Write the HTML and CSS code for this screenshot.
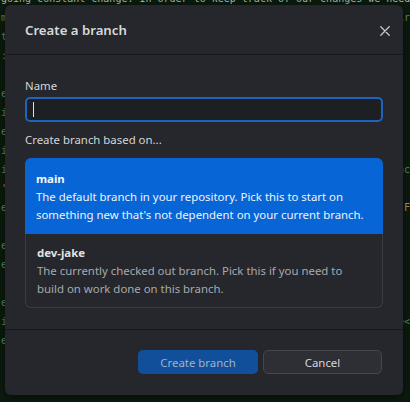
FILE: index.html
```html
<!DOCTYPE html>
<html>
<head>
<meta charset="utf-8">
<link rel="stylesheet" href="styles.css">
</head>
<body>
<div class="term">
  <div class="row"><span class="t-w">going constant change. In order to keep track of our changes we need</span></div>
  <div class="row"><span class="t-g">m</span><span class="t-g">ir</span></div>
  <div class="row"><span class="t-g">ti</span><span class="t-g"></span></div>
  <div class="row"><span class="t-g">:f</span><span class="t-g"></span></div>
  <div class="row"><span class="t-g"></span><span class="t-g"></span></div>
  <div class="row"><span class="t-g">e:</span><span class="t-g"></span></div>
  <div class="row"><span class="t-g">ie</span><span class="t-g"></span></div>
  <div class="row"><span class="t-g">e:</span><span class="t-g"></span></div>
  <div class="row"><span class="t-g">ie</span><span class="t-g"></span></div>
  <div class="row"><span class="t-g">ie</span><span class="t-g">nc</span></div>
  <div class="row"><span class="t-o">'F</span><span class="t-g"></span></div>
  <div class="row"><span class="t-g">e:</span><span class="t-o">'F</span></div>
  <div class="row"><span class="t-g"></span><span class="t-g"></span></div>
  <div class="row"><span class="t-g">e:</span><span class="t-g"></span></div>
  <div class="row"><span class="t-g">e:</span><span class="t-g"></span></div>
  <div class="row"><span class="t-g"></span><span class="t-g"></span></div>
  <div class="row"><span class="t-g">e:</span><span class="t-g"></span></div>
  <div class="row"><span class="t-g">ie</span><span class="t-g">e&lt;</span></div>
  <div class="row"><span class="t-g">ef</span><span class="t-g"></span></div>
  <div class="row"><span class="t-g"></span><span class="t-g"></span></div>
</div>
<div class="dialog">
  <div class="dialog-header">
    <h1 class="dialog-title">Create a branch</h1>
    <button class="close" aria-label="Close">
      <svg width="10" height="10" viewBox="0 0 10 10"><path d="M0.8 0.8 L9.2 9.2 M9.2 0.8 L0.8 9.2" stroke="#c4c6ca" stroke-width="1.3" fill="none" stroke-linecap="round"/></svg>
    </button>
  </div>
  <div class="dialog-body">
    <label class="field-label" for="name">Name</label>
    <div class="input"><span class="caret"></span></div>
    <div class="section-label">Create branch based on...</div>
    <div class="options">
      <div class="option selected">
        <div class="option-name">main</div>
        <div class="option-desc">The default branch in your repository. Pick this to start on something new that's not dependent on your current branch.</div>
      </div>
      <div class="option">
        <div class="option-name">dev-jake</div>
        <div class="option-desc">The currently checked out branch. Pick this if you need to build on work done on this branch.</div>
      </div>
    </div>
  </div>
  <div class="dialog-footer">
    <button class="btn btn-primary">Create branch</button>
    <button class="btn btn-secondary">Cancel</button>
  </div>
</div>
</body>
</html>
```
FILE: styles.css
```css
html, body {
  margin: 0;
  padding: 0;
  background: #0b1a0e;
  width: 410px;
  height: 402px;
  overflow: hidden;
}
.term {
  position: relative;
  top: -11px;
  width: 410px;
  height: 413px;
  overflow: hidden;
  font-family: "DejaVu Sans Mono", monospace;
  font-size: 10px;
  line-height: 19px;
  padding: 0 0 0 1px;
  box-sizing: border-box;
}
.row {
  display: flex;
  justify-content: space-between;
  height: 19px;
  overflow: hidden;
  white-space: pre;
}
.t-w { color: #a9b4a8; }
.t-g { color: #5a8a60; }
.t-o { color: #b39055; }

.dialog {
  position: absolute;
  left: 5px;
  top: 5px;
  width: 398px;
  height: 390px;
  background: #25272c;
  border-radius: 6px;
  box-sizing: border-box;
  display: flex;
  flex-direction: column;
  font-family: "Noto Sans", "Open Sans", sans-serif;
  color: #dcdde0;
  box-shadow: 0 2px 8px rgba(0,0,0,0.5);
}
.dialog-header {
  height: 49px;
  display: flex;
  align-items: center;
  justify-content: space-between;
  padding: 0 9px 0 20px;
  border-bottom: 1px solid #17181b;
}
.dialog-title {
  margin: 0;
  font-size: 13.2px;
  font-weight: 600;
  color: #d7d9dc;
}
.close {
  background: none;
  border: 0;
  padding: 4px;
  display: flex;
  cursor: pointer;
  margin-top: 2px;
}
.dialog-body {
  padding: 22px 20px 21px 20px;
  display: flex;
  flex-direction: column;
  border-bottom: 1px solid #17181b;
}
.field-label {
  font-size: 11.4px;
  line-height: 18px;
  color: #d4d6da;
}
.input {
  margin-top: 2px;
  height: 25px;
  box-sizing: border-box;
  border: 2px solid #1d63c0;
  border-radius: 5px;
  background: #1d1f23;
  display: flex;
  align-items: center;
  padding-left: 6px;
}
.caret {
  width: 1px;
  height: 15px;
  background: #e0e0e0;
}
.section-label {
  margin-top: 9px;
  font-size: 11.4px;
  line-height: 18px;
  color: #d4d6da;
}
.options {
  margin-top: 9px;
  display: flex;
  flex-direction: column;
}
.option {
  padding: 10px 11px 0 11px;
  border: 1px solid #3a3c42;
  border-top: 0;
  border-radius: 0 0 6px 6px;
  font-size: 11.4px;
  line-height: 18px;
  height: 74px;
  box-sizing: border-box;
}
.option.selected {
  background: #0865d6;
  border: 0;
  border-radius: 6px 6px 0 0;
  color: #f2f6fc;
  height: 76px;
  padding: 12px 11px 0 11px;
}
.option-name {
  font-weight: 700;
  color: #dfe1e4;
}
.option.selected .option-name { color: #f4f7fb; }
.option-desc {
  color: #a7aab0;
}
.option.selected .option-desc { color: #eef3fb; }
.dialog-footer {
  flex: 1;
  display: flex;
  justify-content: flex-end;
  align-items: flex-start;
  gap: 5px;
  padding: 20px 21px 0 0;
}
.btn {
  height: 24px;
  border-radius: 5px;
  font-family: "Noto Sans", "Open Sans", sans-serif;
  font-size: 11.4px;
  padding: 0;
  box-sizing: border-box;
}
.btn-primary {
  width: 120px;
  background: #124f9a;
  border: 0;
  color: #9fb3cf;
}
.btn-secondary {
  width: 119px;
  background: #2d2f35;
  border: 1px solid #44474d;
  color: #d7d9dc;
}
```
